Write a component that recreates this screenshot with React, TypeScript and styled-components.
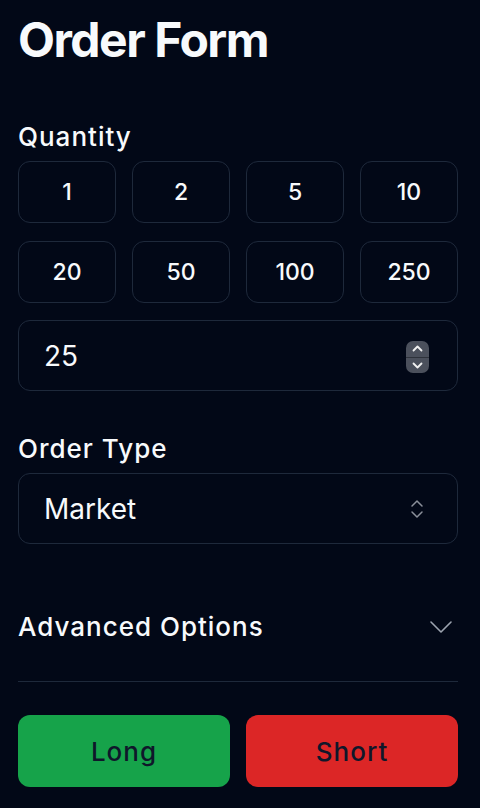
import React, { useState } from "react";
import styled, { createGlobalStyle } from "styled-components";

const GlobalStyle = createGlobalStyle`
  html, body {
    margin: 0;
    padding: 0;
    background: #020817;
  }
  body {
    font-family: Inter, "Noto Sans", sans-serif;
    color: #f8fafc;
  }
  * {
    box-sizing: border-box;
  }
`;

const Page = styled.div`
  width: 480px;
  min-height: 808px;
  padding: 16px 22px 0 18px;
  background: #020817;
`;

const Title = styled.h1`
  margin: 0 0 57px;
  font-size: 48px;
  line-height: 48px;
  font-weight: 700;
  letter-spacing: -1.5px;
`;

const Label = styled.label`
  display: block;
  font-size: 26px;
  line-height: 32px;
  font-weight: 500;
  letter-spacing: 1px;
  margin-bottom: 8px;
`;

const QuickGrid = styled.div`
  display: grid;
  grid-template-columns: repeat(4, 1fr);
  column-gap: 16px;
  row-gap: 18px;
`;

const QuickButton = styled.button<{ $active?: boolean }>`
  height: 62px;
  border: 1px solid #1e293b;
  border-radius: 12px;
  background: ${({ $active }) => ($active ? "#1e293b" : "transparent")};
  color: #f8fafc;
  font-family: Inter, sans-serif;
  font-size: 23px;
  font-weight: 500;
  cursor: pointer;
`;

const InputWrap = styled.div`
  position: relative;
  margin-top: 17px;
`;

const NumberInput = styled.input`
  width: 100%;
  height: 71px;
  border: 1px solid #1e293b;
  border-radius: 12px;
  background: transparent;
  color: #f8fafc;
  font-family: Inter, sans-serif;
  font-size: 28px;
  padding: 0 60px 0 25px;
  outline: none;
  -moz-appearance: textfield;

  &::-webkit-inner-spin-button,
  &::-webkit-outer-spin-button {
    -webkit-appearance: none;
    margin: 0;
  }
`;

const Spinner = styled.div`
  position: absolute;
  right: 29px;
  top: 21px;
  width: 23px;
  height: 32px;
  border-radius: 7px;
  background: #4b505c;
  display: flex;
  flex-direction: column;
  overflow: hidden;
`;

const SpinHalf = styled.div<{ $top?: boolean }>`
  flex: 1;
  display: flex;
  align-items: center;
  justify-content: center;
  border-bottom: ${({ $top }) => ($top ? "1px solid #2e323b" : "none")};
`;

const Section = styled.div`
  margin-top: 42px;
`;

const SelectBox = styled.div`
  height: 71px;
  border: 1px solid #1e293b;
  border-radius: 12px;
  display: flex;
  align-items: center;
  justify-content: space-between;
  padding: 0 33px 0 25px;
  font-size: 28px;
  cursor: pointer;
`;

const Accordion = styled.div`
  margin-top: 29px;
  border-bottom: 1px solid #1e293b;
`;

const Trigger = styled.button`
  width: 100%;
  display: flex;
  align-items: center;
  justify-content: space-between;
  padding: 38px 6px 38px 0;
  background: transparent;
  border: none;
  color: #f8fafc;
  font-family: Inter, sans-serif;
  font-size: 26px;
  line-height: 32px;
  font-weight: 500;
  letter-spacing: 1px;
  cursor: pointer;
`;

const Actions = styled.div`
  display: grid;
  grid-template-columns: 1fr 1fr;
  gap: 16px;
  margin-top: 33px;
`;

const ActionButton = styled.button<{ $tone: "long" | "short" }>`
  height: 72px;
  border: none;
  border-radius: 12px;
  background: ${({ $tone }) => ($tone === "long" ? "#16a34a" : "#dc2626")};
  color: #0f172a;
  font-family: Inter, sans-serif;
  font-size: 26px;
  font-weight: 500;
  letter-spacing: 1px;
  cursor: pointer;
`;

const quantities = [1, 2, 5, 10, 20, 50, 100, 250];

const SmallChevron = ({ up }: { up?: boolean }) => (
  <svg width="11" height="7" viewBox="0 0 11 7" fill="none">
    <polyline
      points={up ? "1.5,5.5 5.5,1.5 9.5,5.5" : "1.5,1.5 5.5,5.5 9.5,1.5"}
      stroke="#f1f1f1"
      strokeWidth="1.8"
      strokeLinecap="round"
      strokeLinejoin="round"
    />
  </svg>
);

const UpDownIcon = () => (
  <svg width="14" height="20" viewBox="0 0 14 20" fill="none">
    <polyline
      points="2,7 7,2 12,7"
      stroke="#8b909a"
      strokeWidth="1.5"
      strokeLinecap="round"
      strokeLinejoin="round"
    />
    <polyline
      points="2,13 7,18 12,13"
      stroke="#8b909a"
      strokeWidth="1.5"
      strokeLinecap="round"
      strokeLinejoin="round"
    />
  </svg>
);

const ChevronDown = () => (
  <svg width="22" height="12" viewBox="0 0 22 12" fill="none">
    <polyline
      points="1,1 11,11 21,1"
      stroke="#9ca3af"
      strokeWidth="1.6"
      strokeLinecap="round"
      strokeLinejoin="round"
    />
  </svg>
);

export default function App() {
  const [qty, setQty] = useState("25");

  return (
    <Page>
      <GlobalStyle />
      <Title>Order Form</Title>

      <Label>Quantity</Label>
      <QuickGrid>
        {quantities.map((q) => (
          <QuickButton key={q} onClick={() => setQty(String(q))}>
            {q}
          </QuickButton>
        ))}
      </QuickGrid>
      <InputWrap>
        <NumberInput
          type="number"
          value={qty}
          onChange={(e) => setQty(e.target.value)}
        />
        <Spinner>
          <SpinHalf $top>
            <SmallChevron up />
          </SpinHalf>
          <SpinHalf>
            <SmallChevron />
          </SpinHalf>
        </Spinner>
      </InputWrap>

      <Section>
        <Label>Order Type</Label>
        <SelectBox>
          <span>Market</span>
          <UpDownIcon />
        </SelectBox>
      </Section>

      <Accordion>
        <Trigger>
          <span>Advanced Options</span>
          <ChevronDown />
        </Trigger>
      </Accordion>

      <Actions>
        <ActionButton $tone="long">Long</ActionButton>
        <ActionButton $tone="short">Short</ActionButton>
      </Actions>
    </Page>
  );
}
